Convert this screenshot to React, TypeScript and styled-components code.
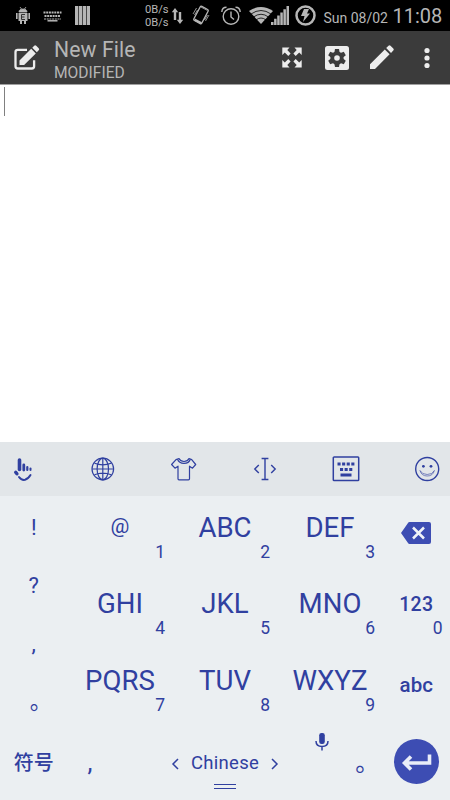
import React from "react";
import styled, { createGlobalStyle } from "styled-components";

const BLUE = "#3040a0";
const GREY = "#b6b6b6";

const GlobalStyle = createGlobalStyle`
  * { box-sizing: border-box; }
  body { margin: 0; background: #fff; font-family: Roboto, "Noto Sans CJK SC", sans-serif; }
  svg { display: block; flex: none; overflow: visible; }
`;

const Screen = styled.div`
  width: 450px;
  height: 800px;
  display: flex;
  flex-direction: column;
  overflow: hidden;
  background: #fff;
`;

const StatusBar = styled.div`
  height: 31px;
  flex: none;
  display: flex;
  background: #000;
  color: ${GREY};
  fill: ${GREY};
`;

const StatusItem = styled.div<{ $gap: number; $top: number }>`
  margin-left: ${(p) => p.$gap}px;
  padding-top: ${(p) => p.$top}px;
  flex: none;
`;

const Rates = styled.div`
  width: 26px;
  font-size: 11.2px;
  line-height: 13px;
  white-space: nowrap;
`;

const StatusDate = styled.div`
  width: 68px;
  font-size: 14px;
  line-height: 20px;
  white-space: nowrap;
`;

const Clock = styled.div`
  font-size: 20px;
  line-height: 25px;
  white-space: nowrap;
`;

const AppBar = styled.header`
  height: 54px;
  flex: none;
  display: flex;
  background: #3b3b3b;
  border-bottom: 1px solid #a0a0a0;
`;

const AppIcon = styled.div`
  width: 54px;
  padding: 14px 0 0 12.5px;
`;

const Titles = styled.div`
  flex: 1;
  padding-top: 6px;
  color: #b5b5b5;
`;

const Title = styled.div`
  font-size: 21.2px;
  line-height: 25px;
  letter-spacing: 0.1px;
`;

const Subtitle = styled.div`
  font-size: 15.6px;
  line-height: 23px;
`;

const Action = styled.div`
  width: 45px;
  height: 53px;
  margin-left: -0.5px;
  margin-right: 0.5px;
  display: flex;
  align-items: center;
  justify-content: center;
`;

const Editor = styled.main`
  flex: 1;
  padding: 2px 0 0 4px;
`;

const Caret = styled.div`
  width: 1px;
  height: 29px;
  background: #808080;
`;

const ToolStrip = styled.div`
  height: 54px;
  flex: none;
  display: flex;
  align-items: center;
  justify-content: space-between;
  padding: 0 10px 0 9px;
  background: #e2e6e9;
`;

const Keyboard = styled.div`
  height: 304px;
  flex: none;
  background: #ebeff2;
  color: ${BLUE};
`;

const Upper = styled.div`
  height: 229px;
  display: grid;
  grid-template-columns: 67.5px repeat(3, 105px) 67.5px;
`;

const Column = styled.div`
  display: flex;
  flex-direction: column;
`;

const Punct = styled.div<{ $shift?: number }>`
  height: 58px;
  text-align: center;
  font-size: 22px;
  line-height: 64px;
  padding-left: ${(p) => p.$shift ?? 0}px;
  flex: none;
`;

const Key = styled.div`
  height: 76.3px;
  flex: none;
  padding-top: 16px;
`;

const Letters = styled.div<{ $size?: number }>`
  height: 31px;
  text-align: center;
  font-size: ${(p) => p.$size ?? 27.6}px;
  line-height: ${(p) => (p.$size ? 28 : 32)}px;
`;

const Digit = styled.div`
  text-align: right;
  padding-right: 7.5px;
  font-size: 17.5px;
  line-height: 19px;
`;

const SideLabel = styled.div<{ $top: number; $size: number; $spacing?: number }>`
  height: 31px;
  margin-top: ${(p) => p.$top}px;
  text-align: center;
  font-size: ${(p) => p.$size}px;
  font-weight: 500;
  line-height: 33px;
  letter-spacing: ${(p) => p.$spacing ?? 0}px;
`;

const DeleteKey = styled.div`
  display: flex;
  justify-content: center;
  padding-top: 10px;
`;

const Lower = styled.div`
  height: 75px;
  display: grid;
  grid-template-columns: 67.5px 45px 195px 74.5px 68px;
`;

const Symbols = styled.div`
  text-align: center;
  font-size: 20px;
  font-weight: 500;
  line-height: 76px;
`;

const LowerComma = styled.div`
  text-align: center;
  font-size: 25px;
  line-height: 76px;
`;

const SpaceArea = styled.div`
  display: flex;
  flex-direction: column;
  align-items: center;
  padding: 26px 0 0 30px;
`;

const SpaceLabel = styled.div`
  display: flex;
  align-items: center;
  gap: 11.5px;
  font-size: 18.5px;
  line-height: 25px;
  letter-spacing: 0.3px;
`;

const Handle = styled.div`
  width: 22px;
  height: 5px;
  margin-top: 8px;
  border-top: 1.5px solid ${BLUE};
  border-bottom: 1.5px solid ${BLUE};
`;

const LowerRight = styled.div`
  display: grid;
  grid-template-columns: 1fr 1fr;
`;

const MicSlot = styled.div`
  padding: 8px 0 0 7.5px;
`;

const FullStop = styled.div`
  padding-left: 10.5px;
  font-size: 24px;
  line-height: 76px;
`;

const EnterKey = styled.div`
  width: 45px;
  height: 45px;
  margin: 14px 0 0 12px;
  border-radius: 50%;
  background: #3d4db3;
  display: flex;
  align-items: center;
  justify-content: center;
`;

const RobotIcon = () => (
  <svg width="16" height="18" viewBox="0 0 16 18">
    <path d="M4 5C4 3 5.500 2 8 2s4 1 4 3zM5 0l1.500 2M11 0L9.500 2" stroke={GREY} strokeWidth=".8" />
    <rect x="3.500" y="6" width="9" height="8" />
    <path d="M1 6h1.600v6H1zM13.400 6H15v6h-1.600zM5 14h2v3H5zM9 14h2v3H9z" />
    <path d="M10 7.500H6.500v5H10M6.500 10h3" stroke="#333" strokeWidth="1" fill="none" />
  </svg>
);

const KeysIcon = () => (
  <svg width="19" height="11" viewBox="0 0 19 11" stroke={GREY} fill="none" strokeWidth="2">
    <path d="M.5 1.500h18" strokeDasharray="2 .7" />
    <path d="M1.500 5h16" strokeDasharray="2 .7" />
    <path d="M1 8h17" strokeWidth="1.200" strokeDasharray="2 .7" />
    <path d="M4.500 9.800h10" strokeWidth="1.500" />
  </svg>
);

const BarsIcon = () => (
  <svg width="15" height="19" viewBox="0 0 15 19">
    <path d="M0 0h3.300v19H0zM3.900 0h3.300v19H3.900zM7.800 0h3.300v19H7.800zM11.700 0H15v19h-3.300z" />
  </svg>
);

const TransferIcon = () => (
  <svg width="11" height="16" viewBox="0 0 11 16">
    <path d="M3 0l3.200 4.200H4.200V12H1.800V4.200H-.2zM8 16l3.200-4.200H9.200V4H6.800v7.800H4.800z" />
  </svg>
);

const RotateIcon = () => (
  <svg width="18" height="20" viewBox="0 0 18 20" fill="none" stroke={GREY} strokeWidth="1.200">
    <rect x="4.500" y="2" width="9" height="16" rx="1.200" transform="rotate(28 9 10)" />
    <path d="M1 9l3.500-6M2.500 10l3-5M13.500 16l3.500-6M12.500 15l3-5M8.500 1.800l7 3.700" strokeWidth=".8" />
    <path d="M2.500 14.500l7 3.700" strokeWidth="2" />
  </svg>
);

const AlarmIcon = () => (
  <svg width="20" height="19" viewBox="0 0 20 19" fill="none" stroke={GREY} strokeWidth="1.400">
    <circle cx="10" cy="10.500" r="7.800" />
    <path d="M.8 6C1 3 3 1.300 5.500 1.300M14.500 1.300C17 1.300 19 3 19.200 6M10 5.500V11l3 2.500" />
  </svg>
);

const WifiIcon = () => (
  <svg width="24" height="17" viewBox="0 0 24 17">
    <path d="M12 17L0 4Q12-4 24 4z" />
    <path d="M2 7Q12 0 22 7M4.500 10Q12 4.500 19.500 10M7 13Q12 9 17 13" fill="none" stroke="#000" strokeWidth=".8" />
  </svg>
);

const SignalIcon = () => (
  <svg width="18" height="19" viewBox="0 0 18 19">
    <path d="M0 16h2.500v3H0zM3.100 12.800h2.500V19H3.100zM6.200 9.600h2.500V19H6.200zM9.300 6.400h2.500V19H9.300zM12.400 3.200h2.500V19h-2.500zM15.500 0H18v19h-2.500z" />
  </svg>
);

const ChargeIcon = () => (
  <svg width="21" height="21" viewBox="0 0 21 21">
    <circle cx="10.500" cy="10.500" r="9" fill="none" stroke={GREY} strokeWidth="2.500" />
    <path d="M9 4h5l-2 4.500h3L8 17l1.500-6H6z" />
  </svg>
);

const ComposeIcon = () => (
  <svg width="27" height="26" viewBox="0 0 27 26">
    <path d="M14 4.800H4.800Q2.500 4.800 2.500 7v14.200q0 2.300 2.300 2.300h14q2.300 0 2.300-2.300v-6" fill="none" stroke="#ededed" strokeWidth="2.300" />
    <path d="M6.500 15.500L18.200 3.800l4.600 4.600L11.100 20.100H6.500zM19.300 2.700l1.900-1.900q1-1 2 0l2.500 2.500q1 1 0 2l-1.900 1.900z" fill="#ededed" />
  </svg>
);

const ExpandIcon = () => (
  <svg width="20" height="21" viewBox="0 0 20 21" fill="#ededed">
    {["", "translate(20 0) scale(-1 1)", "translate(0 21) scale(1 -1)", "translate(20 21) scale(-1 -1)"].map((t) => (
      <path key={t} transform={t || undefined} d="M.3.500h7.200L5.300 2.900 8.600 6.400 6.300 8.900 2.800 5.500.3 7.900z" />
    ))}
  </svg>
);

const SettingsIcon = () => (
  <svg width="24" height="24" viewBox="0 0 24 24">
    <rect width="24" height="24" rx="2.500" fill="#ededed" />
    <circle cx="12" cy="12" r="6.600" fill="#3b3b3b" />
    {[0, 60, 120, 180, 240, 300].map((a) => (
      <path key={a} d="M9.400 6.500L10 3h4l.6 3.500z" fill="#3b3b3b" transform={`rotate(${a} 12 12)`} />
    ))}
    <circle cx="12" cy="12" r="2.800" fill="#ededed" />
  </svg>
);

const PencilIcon = () => (
  <svg width="24" height="25" viewBox="0 0 24 25" fill="#ededed">
    <path d="M0 19.300L14.800 4.500l4.800 4.800L5 24H0zM16.200 3.100L18.500.8q1-.9 2 0l2.800 2.800q1 1 0 2L21 7.900z" />
  </svg>
);

const MoreIcon = () => (
  <svg width="6" height="22" viewBox="0 0 6 22" fill="#ededed">
    <circle cx="3" cy="3.500" r="2.600" />
    <circle cx="3" cy="11" r="2.600" />
    <circle cx="3" cy="18.500" r="2.600" />
  </svg>
);

const tool = { width: 26, height: 26, viewBox: "0 0 26 26", fill: "none", stroke: BLUE, strokeWidth: 1.2 };

const HandIcon = () => (
  <svg {...tool} strokeLinecap="round">
    <g transform="translate(3.500 0)">
      <path d="M7 4v9.500" strokeWidth="3.600" />
      <path d="M11.300 9v5" strokeWidth="2.800" />
      <path d="M14.800 11v3" strokeWidth="2.200" />
      <path d="M18 12.500v1.500" strokeWidth="2" />
      <path d="M3.200 16.300l1.200 1.500" strokeWidth="3.400" />
      <path d="M6.500 21q2.500 3.500 6 2.800 3-.8 5.500-4.800" strokeWidth="2" />
    </g>
  </svg>
);

const GlobeIcon = () => (
  <svg {...tool}>
    <circle cx="12.800" cy="13" r="10.800" />
    <ellipse cx="12.800" cy="13" rx="5.700" ry="10.800" />
    <path d="M12.800 2.200v21.600M2 13h21.600M4.500 7.300q8.300 3 16.600 0M4.500 18.700q8.300-3 16.600 0" />
  </svg>
);

const ShirtIcon = () => (
  <svg {...tool} strokeLinejoin="round">
    <path d="M8 2.500L5 3.600.6 8.500 4 12.200l3-2v12.600q0 1 1 1h9.500q1 0 1-1V10.200l3 2 3.200-3.700L20.700 3.600 18 2.500q-1.500 3-5 3t-5-3z" />
    <path d="M6.500 3.200Q8 7.300 13 7.300t6.300-4.100" />
  </svg>
);

const CursorIcon = () => (
  <svg {...tool} strokeWidth="1.400">
    <path d="M13 2.500v21M9.600 2.500h6.800M9.600 23.500h6.800M6.800 9l-4 4 4 4M19.200 9l4 4-4 4" />
  </svg>
);

const KeyboardIcon = () => (
  <svg {...tool}>
    <rect x=".3" y="1" width="25.400" height="23.500" rx=".8" strokeWidth="1.500" />
    <path d="M4.500 8h17" strokeWidth="3" strokeDasharray="3.100 1.500" />
    <path d="M7 13.500h12.500" strokeWidth="3" strokeDasharray="3.100 1.500" />
    <path d="M7.500 19h11" strokeWidth="3" />
  </svg>
);

const SmileIcon = () => (
  <svg {...tool} strokeWidth="1.400">
    <circle cx="13.200" cy="13" r="11.500" />
    <path d="M6 14.500q1.500 5.500 7.200 5.500t7.200-5.500q-2 4-7.200 4T6 14.500z" strokeWidth=".6" />
    <circle cx="9.400" cy="10.300" r="1.400" fill={BLUE} stroke="none" />
    <circle cx="17" cy="10.300" r="1.400" fill={BLUE} stroke="none" />
  </svg>
);

const BackspaceIcon = () => (
  <svg width="30" height="22" viewBox="0 0 30 22">
    <path d="M8.500 0H28q2 0 2 2v18q0 2-2 2H8.500Q7.500 22 7 21L0 11 7 1q.5-1 1.500-1z" fill="#3d4db3" />
    <path d="M12 5.500l11 11M23 5.500l-11 11" stroke="#f0f3f8" strokeWidth="2.500" />
  </svg>
);

const Chevron = ({ right = false }: { right?: boolean }) => (
  <svg width="7" height="12" viewBox="0 0 7 12" fill="none" stroke={BLUE} strokeWidth="1.500">
    <path d={right ? "M1 1l5 5-5 5" : "M6 1L1 6l5 5"} />
  </svg>
);

const MicIcon = () => (
  <svg width="14" height="18" viewBox="0 0 14 18">
    <rect x="4.200" y="0" width="5.600" height="11" rx="2.300" fill={BLUE} />
    <path d="M1 8q0 5.500 6 5.500T13 8M7 13.500V17.500" fill="none" stroke={BLUE} strokeWidth="1.500" />
  </svg>
);

const EnterIcon = () => (
  <svg width="30" height="18" viewBox="0 0 30 18" fill="none" stroke="#e9edf8" strokeWidth="3.600">
    <path d="M27.500 1.500v8.500H3M9 3.500L2.500 10 9 16.500" />
  </svg>
);

const columns = [
  [["@", "1"], ["GHI", "4"], ["PQRS", "7"]],
  [["ABC", "2"], ["JKL", "5"], ["TUV", "8"]],
  [["DEF", "3"], ["MNO", "6"], ["WXYZ", "9"]],
];

export default function App() {
  return (
    <Screen>
      <GlobalStyle />
      <StatusBar>
        <StatusItem $gap={15} $top={7}><RobotIcon /></StatusItem>
        <StatusItem $gap={12} $top={11}><KeysIcon /></StatusItem>
        <StatusItem $gap={13} $top={6}><BarsIcon /></StatusItem>
        <StatusItem $gap={55} $top={3}>
          <Rates>
            <div>0B/s</div>
            <div>0B/s</div>
          </Rates>
        </StatusItem>
        <StatusItem $gap={1} $top={8}><TransferIcon /></StatusItem>
        <StatusItem $gap={9} $top={5}><RotateIcon /></StatusItem>
        <StatusItem $gap={11} $top={6}><AlarmIcon /></StatusItem>
        <StatusItem $gap={8} $top={7}><WifiIcon /></StatusItem>
        <StatusItem $gap={-2} $top={6}><SignalIcon /></StatusItem>
        <StatusItem $gap={6} $top={5}><ChargeIcon /></StatusItem>
        <StatusItem $gap={7.5} $top={8}><StatusDate>Sun 08/02</StatusDate></StatusItem>
        <StatusItem $gap={1} $top={4}><Clock>11:08</Clock></StatusItem>
      </StatusBar>
      <AppBar>
        <AppIcon><ComposeIcon /></AppIcon>
        <Titles>
          <Title>New File</Title>
          <Subtitle>MODIFIED</Subtitle>
        </Titles>
        <Action><ExpandIcon /></Action>
        <Action><SettingsIcon /></Action>
        <Action><PencilIcon /></Action>
        <Action><MoreIcon /></Action>
      </AppBar>
      <Editor><Caret /></Editor>
      <ToolStrip>
        <HandIcon />
        <GlobeIcon />
        <ShirtIcon />
        <CursorIcon />
        <KeyboardIcon />
        <SmileIcon />
      </ToolStrip>
      <Keyboard>
        <Upper>
          <Column>
            <Punct>!</Punct>
            <Punct>?</Punct>
            <Punct>,</Punct>
            <Punct $shift={14}>。</Punct>
          </Column>
          {columns.map((keys, i) => (
            <Column key={i}>
              {keys.map(([label, digit]) => (
                <Key key={digit}>
                  <Letters $size={label === "@" ? 21 : undefined}>{label}</Letters>
                  <Digit>{digit}</Digit>
                </Key>
              ))}
            </Column>
          ))}
          <Column>
            <Key><DeleteKey><BackspaceIcon /></DeleteKey></Key>
            <Key>
              <SideLabel $top={0} $size={19.5} $spacing={0.2}>123</SideLabel>
              <Digit>0</Digit>
            </Key>
            <Key><SideLabel $top={4} $size={20.5}>abc</SideLabel></Key>
          </Column>
        </Upper>
        <Lower>
          <Symbols>符号</Symbols>
          <LowerComma>,</LowerComma>
          <SpaceArea>
            <SpaceLabel>
              <Chevron />
              <span>Chinese</span>
              <Chevron right />
            </SpaceLabel>
            <Handle />
          </SpaceArea>
          <LowerRight>
            <MicSlot><MicIcon /></MicSlot>
            <FullStop>。</FullStop>
          </LowerRight>
          <EnterKey><EnterIcon /></EnterKey>
        </Lower>
      </Keyboard>
    </Screen>
  );
}
